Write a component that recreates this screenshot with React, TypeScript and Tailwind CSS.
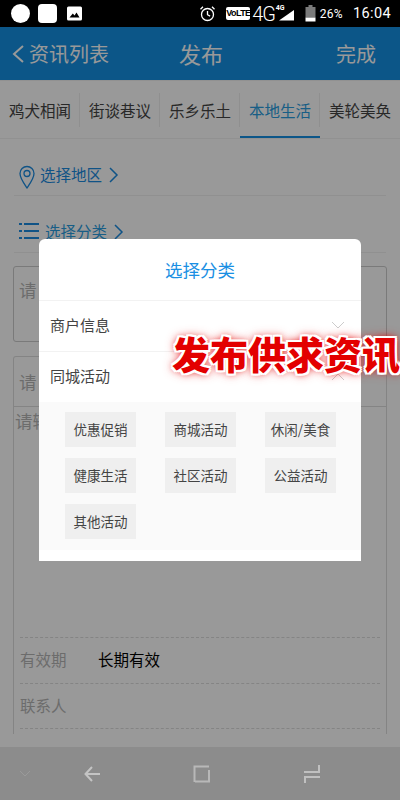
const font = { fontFamily: '"Noto Sans CJK SC", "Liberation Sans", sans-serif' };

const tabs = ["鸡犬相闻", "街谈巷议", "乐乡乐土", "本地生活", "美轮美奂"];
const chips = ["优惠促销", "商城活动", "休闲/美食", "健康生活", "社区活动", "公益活动", "其他活动"];

function StatusBar() {
  return (
    <div className="h-[27px] bg-black flex items-center text-white shrink-0 pl-[11px] pr-[9px]">
      <div className="w-[19px] h-[19px] rounded-full bg-white" />
      <div className="w-[19px] h-[19px] rounded-[4px] bg-white ml-[8px]" />
      <svg className="ml-[10px]" width="15" height="15" viewBox="0 0 15 15">
        <rect width="15" height="14" y="0.5" rx="1.5" fill="#fff" />
        <path d="M2.5 11.5 L5.8 7.5 L7.5 9.5 L9.5 6.5 L12.5 11.5Z" fill="#000" />
      </svg>
      <div className="flex-1" />
      <svg width="17" height="17" viewBox="0 0 17 17" fill="none" stroke="#fff" strokeWidth="1.3">
        <circle cx="8.5" cy="9.5" r="6" />
        <path d="M8.5 6v3.7l2.6 1.4M1.5 4.2 4 1.8M15.5 4.2 13 1.8" />
      </svg>
      <div className="ml-[10px] h-[13px] w-[24px] rounded-[2px] bg-white text-black text-[9px] leading-[13px] font-bold text-center tracking-[-0.6px] overflow-hidden" style={{ fontFamily: '"Liberation Sans", sans-serif' }}>VoLTE</div>
      <div className="ml-[2px] text-[20px] leading-[20px] tracking-[-1.2px] font-light" style={{ fontFamily: '"Roboto", sans-serif' }}>4G</div>
      <div className="relative w-[17px] h-[17px] ml-[3px]">
        <svg className="absolute left-0 top-0" width="17" height="17" viewBox="0 0 17 17">
          <path d="M1 15.500 L16 5 V15.500Z" fill="#fff" />
        </svg>
        <div className="absolute -left-[2px] -top-[1px] text-[7px] leading-[8px] font-bold" style={{ fontFamily: '"Roboto", sans-serif' }}>4G</div>
      </div>
      <svg className="ml-[10px]" width="11" height="17" viewBox="0 0 11 17">
        <rect x="3.500" y="0" width="4" height="2" fill="#7a7a7a" />
        <rect x="0.500" y="2" width="10" height="10.500" fill="#7a7a7a" />
        <rect x="0.500" y="12.500" width="10" height="4" fill="#fff" />
      </svg>
      <div className="ml-[4px] text-[12px] tracking-[0.3px]" style={{ fontFamily: '"Roboto", sans-serif' }}>26%</div>
      <div className="ml-[10px] text-[14.500px] tracking-[0.4px]" style={{ fontFamily: '"Roboto", sans-serif' }}>16:04</div>
    </div>
  );
}

function Content() {
  return (
    <div className="h-[720px] bg-white overflow-hidden flex flex-col" style={font}>
      <div className="h-[53px] shrink-0 bg-[#1490e3] text-white flex items-center relative">
        <svg className="ml-[11px]" width="14" height="20" viewBox="0 0 14 20" fill="none" stroke="#fff" strokeWidth="2">
          <path d="M12 2 L3 10 L12 18" />
        </svg>
        <span className="ml-[4px] text-[20px]">资讯列表</span>
        <span className="ml-[70px] text-[22px]">发布</span>
        <span className="ml-auto mr-[24px] text-[20px]">完成</span>
      </div>
      <div className="h-[59px] shrink-0 flex border-y border-[#f2f2f2] bg-white">
        {tabs.map((t, i) => (
          <div key={t} className="w-[80px] relative flex items-center justify-center pt-[2px]">
            <span className={`text-[15.5px] ${i === 3 ? "text-[#2a9de0]" : "text-[#444444]"}`}>{t}</span>
            {i < 4 && <div className="absolute right-0 top-[12px] h-[34px] w-px bg-[#eeeeee]" />}
            {i === 3 && <div className="absolute left-0 right-0 bottom-0 h-[2px] bg-[#1490e3]" />}
          </div>
        ))}
      </div>
      <div className="px-[13px]">
        <div className="h-[57px] mx-[1px] pl-[5px] pr-[5px] pt-[16px] flex items-center border-b border-[#f0f0f0]">
          <svg className="mt-[3px]" width="16" height="24" viewBox="0 0 16 24" fill="none" stroke="#1b8be0" strokeWidth="1.300">
            <path d="M8 23 C4 17 1 13 1 8.500 A7 7 0 0 1 15 8.500 C15 13 12 17 8 23Z" />
            <circle cx="8" cy="8.500" r="3" />
          </svg>
          <span className="ml-[5px] text-[15.5px] text-[#1b8be0]">选择地区</span>
          <svg className="ml-[6px]" width="11" height="16" viewBox="0 0 11 16" fill="none" stroke="#1b8be0" strokeWidth="1.500"><path d="M2 1 L9 8 L2 15" /></svg>
        </div>
        <div className="h-[57px] mx-[1px] pl-[5px] pt-[16px] flex items-center border-b border-[#f0f0f0]">
          <svg className="-mt-[2px]" width="20" height="20" viewBox="0 0 20 20" fill="#1b8be0">
            <rect x="0" y="2" width="3" height="2" /><rect x="5" y="2" width="15" height="2" />
            <rect x="0" y="9" width="3" height="2" /><rect x="5" y="9" width="15" height="2" />
            <rect x="0" y="16" width="3" height="2" /><rect x="5" y="16" width="15" height="2" />
          </svg>
          <span className="ml-[6px] text-[15.5px] text-[#2a9de0]">选择分类</span>
          <svg className="ml-[6px]" width="11" height="16" viewBox="0 0 11 16" fill="none" stroke="#1b8be0" strokeWidth="1.500"><path d="M2 1 L9 8 L2 15" /></svg>
        </div>
        <div className="mt-[13px] h-[76px] border border-[#cccccc] rounded-[3px] px-[5px] pt-[10px] text-[17.500px] text-[#b5b5b5]">请</div>
        <div className="mt-[14px] h-[378px] border border-[#dddddd] rounded-t-[3px] border-b-0 flex flex-col">
          <div className="h-[50px] shrink-0 border-b border-[#dddddd] px-[5px] pt-[2px] flex items-center text-[17.500px] text-[#b5b5b5]">请</div>
          <div className="h-[230px] shrink-0 px-[1px] pt-[1px] text-[17.500px] text-[#b5b5b5]">请输</div>
          <div className="mx-[6px] border-t border-dashed border-[#dddddd] h-[46px] pb-[1px] flex items-center text-[15.5px]">
            <span className="w-[78px] text-[#b5b5b5]">有效期</span>
            <span className="text-black">长期有效</span>
          </div>
          <div className="mx-[6px] border-y border-dashed border-[#dddddd] h-[46px] pb-[1px] flex items-center text-[15.5px] text-[#b5b5b5]">联系人</div>
        </div>
      </div>
    </div>
  );
}

function Row({ label, up }: { label: string; up?: boolean }) {
  return (
    <div className="h-[51px] border-t border-[#f2f2f2] flex items-center justify-between pl-[11px] pr-[16px] pb-[2px]">
      <span className="text-[15px] text-[#444444]">{label}</span>
      <svg width="14" height="9" viewBox="0 0 14 9" fill="none" stroke="#cccccc" strokeWidth="1">
        <path d={up ? "M1 8 L7 2 L13 8" : "M1 1 L7 7 L13 1"} />
      </svg>
    </div>
  );
}

function Modal() {
  return (
    <div className="absolute left-[39px] top-[212px] w-[322px] h-[322px] bg-white rounded-t-[6px] flex flex-col" style={font}>
      <div className="h-[61px] pt-[1px] flex items-center justify-center text-[17.500px] text-[#1a8fe3]">选择分类</div>
      <Row label="商户信息" />
      <Row label="同城活动" up />
      <div className="bg-[#fafafa] pl-[26px] pt-[10px] pb-[11px] grid grid-cols-[71px_71px_71px] gap-x-[29px] gap-y-[11px]">
        {chips.map((c) => (
          <div key={c} className="h-[35px] bg-[#efefef] flex items-center justify-center text-[13.500px] text-[#444444]">{c}</div>
        ))}
      </div>
    </div>
  );
}

function NavBar() {
  return (
    <div className="h-[53px] shrink-0 bg-[#8c8c8c] relative flex items-center">
      <svg className="ml-[19px]" width="12" height="8" viewBox="0 0 12 8" fill="none" stroke="#9a9a9a" strokeWidth="1"><path d="M1 1 L6 6 L11 1" /></svg>
      <svg className="ml-[53px]" width="17" height="16" viewBox="0 0 17 16" fill="none" stroke="#c4c4c4" strokeWidth="2"><path d="M8 1 L1.500 8 L8 15 M2 8 H16" /></svg>
      <svg className="ml-[92px]" width="17" height="18" viewBox="0 0 17 18" fill="none" stroke="#b8b8b8" strokeWidth="2"><path d="M1.500 17 V1.500 H16 M16 5 V16.500 H2" /></svg>
      <svg className="ml-[93px]" width="18" height="20" viewBox="0 0 18 20" fill="none" stroke="#c0c0c0" strokeWidth="2"><path d="M16 1 V8 H1 M17 13 H2 V19" /></svg>
    </div>
  );
}

export default function App() {
  return (
    <div className="relative w-[400px] h-[800px] overflow-hidden flex flex-col bg-white">
      <StatusBar />
      <div className="relative h-[720px] shrink-0">
        <Content />
        <div className="absolute inset-0 bg-black/40" />
        <Modal />
      </div>
      <NavBar />
      <div
        className="absolute left-[172px] top-[329px] text-[38px] leading-[48px] font-black whitespace-nowrap text-[#e30000]"
        style={{
          ...font,
          textShadow:
            "2px 0 0 #fff,-2px 0 0 #fff,0 2px 0 #fff,0 -2px 0 #fff,2px 2px 0 #fff,-2px -2px 0 #fff,2px -2px 0 #fff,-2px 2px 0 #fff,0 0 6px rgba(227,0,0,0.8),0 0 11px rgba(227,0,0,0.8)",
        }}
      >
        发布供求资讯
      </div>
    </div>
  );
}
